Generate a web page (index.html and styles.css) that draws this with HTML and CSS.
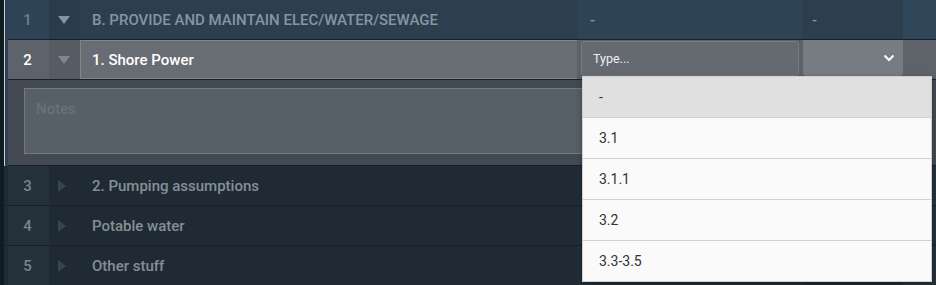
FILE: index.html
```html
<!DOCTYPE html>
<html>
  <head>
    <meta charset="utf-8">
    <link rel="stylesheet" href="styles.css">
  </head>
  <body>
    <div id="sheet">
      <div class="group open">
        <div class="row row-head">
          <div class="num">1</div>
          <div class="toggle"><span class="tri down"></span></div>
          <div class="title">B. PROVIDE AND MAINTAIN ELEC/WATER/SEWAGE</div>
          <div class="cell cell-a">-</div>
          <div class="cell cell-b">-</div>
          <div class="cell cell-c"></div>
        </div>
        <div class="row row-edit">
          <div class="num">2</div>
          <div class="toggle"><span class="tri down"></span></div>
          <div class="title"><div class="field">1. Shore Power</div></div>
          <div class="cell cell-a"><div class="type-field">Type...</div></div>
          <div class="cell cell-b">
            <div class="select">
              <svg width="12" height="8" viewBox="0 0 12 8"><path d="M1.5 1.5 L6 6 L10.5 1.5" fill="none" stroke="#fff" stroke-width="2"/></svg>
            </div>
          </div>
          <div class="cell cell-c"></div>
        </div>
        <div class="notes">
          <div class="notes-box">Notes</div>
        </div>
      </div>
      <div class="row row-closed">
        <div class="num">3</div>
        <div class="toggle"><span class="tri right"></span></div>
        <div class="title">2. Pumping assumptions</div>
        <div class="cell cell-a"></div>
        <div class="cell cell-b"></div>
        <div class="cell cell-c"></div>
      </div>
      <div class="row row-closed">
        <div class="num">4</div>
        <div class="toggle"><span class="tri right"></span></div>
        <div class="title">Potable water</div>
        <div class="cell cell-a"></div>
        <div class="cell cell-b"></div>
        <div class="cell cell-c"></div>
      </div>
      <div class="row row-closed last">
        <div class="num">5</div>
        <div class="toggle"><span class="tri right"></span></div>
        <div class="title">Other stuff</div>
        <div class="cell cell-a"></div>
        <div class="cell cell-b"></div>
        <div class="cell cell-c"></div>
      </div>

      <ul class="menu">
        <li class="active">-</li>
        <li>3.1</li>
        <li>3.1.1</li>
        <li>3.2</li>
        <li>3.3-3.5</li>
      </ul>
    </div>
  </body>
</html>
```

FILE: styles.css
```css
html, body {
  margin: 0;
  padding: 0;
  width: 936px;
  height: 285px;
  overflow: hidden;
  background: #101a21;
  font-family: Roboto, "Liberation Sans", sans-serif;
  font-size: 15px;
}

#sheet {
  position: relative;
  margin-left: 4px;
  display: flex;
  flex-direction: column;
}

.group {
  display: flex;
  flex-direction: column;
  border-left: 1px solid #c9d1d6;
  padding-left: 3px;
  background: #2c4152;
}

.row {
  display: flex;
  height: 39px;
  border-bottom: 1px solid #17212a;
}

.row > div {
  display: flex;
  align-items: center;
}

.num {
  width: 41px;
  justify-content: center;
  padding-right: 2px;
  box-sizing: border-box;
}

.toggle {
  width: 31px;
  justify-content: center;
  padding-right: 2px;
  box-sizing: border-box;
}

.title {
  width: 497px;
  box-sizing: border-box;
  padding-left: 12px;
}

.cell-a {
  width: 226px;
  box-sizing: border-box;
  padding-left: 13px;
}

.cell-b {
  width: 100px;
  box-sizing: border-box;
  padding-left: 9px;
}

.cell-c {
  flex: 1;
}

.tri {
  width: 0;
  height: 0;
}

.tri.down {
  border-left: 6px solid transparent;
  border-right: 6px solid transparent;
  border-top: 8px solid #8596a3;
}

.tri.right {
  border-top: 6px solid transparent;
  border-bottom: 6px solid transparent;
  border-left: 8px solid #364550;
  margin-right: 3px;
}

/* header row of the open group */
.row-head {
  background: #2b3f4f;
  color: #8596a3;
  font-weight: 500;
}

.row-head .num {
  background: #2e4455;
  color: #6d8190;
}

.row-head .toggle {
  background: #293c4b;
}

.row-head .title {
  text-transform: uppercase;
}

.row-head .cell-a {
  background: #2e4454;
}

.row-head .cell-c {
  background: #30475a;
}

/* editing row */
.row-edit {
  background: #5b6269;
  color: #fff;
}

.row-edit .num {
  background: #5c636a;
  font-weight: 500;
}

.row-edit .toggle {
  background: #555c63;
}

.row-edit .tri.down {
  border-top-color: #80878d;
}

.row-edit .title {
  padding: 0;
  align-items: stretch;
}

.field {
  flex: 1;
  display: flex;
  align-items: center;
  padding-left: 11px;
  background: #676d73;
  border: 1px solid #7f868b;
  border-right: none;
  font-weight: 500;
}

.row-edit .cell-a {
  padding: 1px 4px 3px 4px;
  align-items: stretch;
}

.type-field {
  flex: 1;
  display: flex;
  align-items: center;
  padding-left: 11px;
  background: #646a70;
  border: 1px solid #757b81;
  border-radius: 3px;
  font-size: 12.5px;
  color: #eef0f2;
}

.row-edit .cell-b {
  padding: 0 0 3px 0;
  align-items: stretch;
}

.select {
  flex: 1;
  display: flex;
  align-items: center;
  justify-content: flex-end;
  padding-right: 8px;
  background: #767c82;
  border-radius: 0 0 3px 3px;
}

.row-edit .cell-c {
  background: #5d6369;
}

/* notes panel */
.notes {
  background: #434a53;
  border-bottom: 1px solid #17212a;
  padding: 8px 16px 11px 16px;
  height: 86px;
  box-sizing: border-box;
  display: flex;
}

.notes-box {
  flex: 1;
  background: #576068;
  border: 1px solid #737b82;
  color: #6c747b;
  padding: 11px 11px;
  font-size: 15px;
}

/* collapsed rows */
.row-closed {
  background: #1f2a34;
  color: #868f96;
  padding-left: 4px;
  font-weight: 500;
}

.row-closed.last {
  border-bottom: none;
}

.row-closed .num {
  background: #24313b;
  color: #7b858c;
}

.row-closed .cell-a {
  background: #222e38;
}

.row-closed .cell-c {
  background: #26323c;
}

/* dropdown list over the rows */
.menu {
  position: absolute;
  left: 578px;
  top: 76px;
  width: 348px;
  margin: 0;
  padding: 0;
  list-style: none;
  background: #fafafa;
  border: 1px solid #cfcfcf;
  box-shadow: 0 2px 6px rgba(0, 0, 0, .3);
}

.menu li {
  height: 40px;
  line-height: 40px;
  padding-left: 16px;
  font-size: 14px;
  color: #333;
  border-top: 1px solid #d0d0d0;
}

.menu li:first-child {
  border-top: none;
}

.menu li.active {
  background: #e0e0e0;
}
```
